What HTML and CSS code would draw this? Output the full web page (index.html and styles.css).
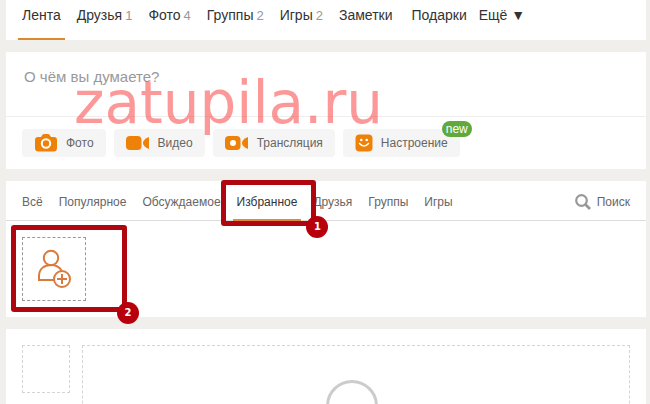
FILE: index.html
```html
<!DOCTYPE html>
<html lang="ru">
<head>
    <meta charset="UTF-8">
    <meta name="viewport" content="width=device-width, initial-scale=1.0">
    <title>Лента</title>
    <link rel="stylesheet" href="styles.css">
</head>
<body>
    <nav class="panel main-nav">
        <a class="nav-item active" href="#">Лента</a>
        <a class="nav-item" href="#">Друзья<span class="count">1</span></a>
        <a class="nav-item" href="#">Фото<span class="count">4</span></a>
        <a class="nav-item" href="#">Группы<span class="count">2</span></a>
        <a class="nav-item" href="#">Игры<span class="count">2</span></a>
        <a class="nav-item" href="#">Заметки<span class="count"></span></a>
        <a class="nav-item" href="#">Подарки</a>
        <button class="nav-more" type="button">Ещё ▼</button>
    </nav>

    <section class="panel composer">
        <input class="composer-input" type="text" placeholder="О чём вы думаете?" aria-label="О чём вы думаете?">
        <div class="composer-actions">
            <button class="action" type="button">
                <svg width="24" height="18" viewBox="0 0 24 18">
                    <path fill="#ee8208" d="M4 3h3l1.500-2.200Q9 0 10 0h4q1 0 1.500.8L17 3h3q3 0 3 3v8q0 3.500-3.500 3.500h-15Q1 17.500 1 14V6q0-3 3-3z"/>
                    <circle cx="12" cy="9.500" r="4.200" fill="none" stroke="#fff" stroke-width="2"/>
                </svg>
                Фото
            </button>
            <button class="action" type="button">
                <svg width="24" height="18" viewBox="0 0 24 18">
                    <rect x="0" y="2" width="15.500" height="14" rx="4" fill="#ee8208"/>
                    <path fill="#ee8208" d="M23 3v12q-6-2.500-6-6t6-6z"/>
                </svg>
                Видео
            </button>
            <button class="action" type="button">
                <svg width="24" height="18" viewBox="0 0 24 18">
                    <rect x="0" y="2" width="15.500" height="14" rx="4" fill="#ee8208"/>
                    <circle cx="8" cy="9" r="3" fill="#fff"/>
                    <path fill="#ee8208" d="M23 3v12q-6-2.500-6-6t6-6z"/>
                </svg>
                Трансляция
            </button>
            <button class="action" type="button">
                <svg width="18" height="18" viewBox="0 0 18 18">
                    <rect x="0.500" y="0.500" width="17" height="17" rx="4" fill="#ee8208"/>
                    <circle cx="6.300" cy="6" r="1.300" fill="#fff"/>
                    <circle cx="11.700" cy="6" r="1.300" fill="#fff"/>
                    <path d="M4.500 9.500q4.500 5 9 0" fill="none" stroke="#fff" stroke-width="1.500" stroke-linecap="round"/>
                </svg>
                Настроение
                <span class="new-badge">new</span>
            </button>
        </div>
        <div class="watermark">zatupila.ru</div>
    </section>

    <section class="panel feed">
        <div class="tabs">
            <a class="tab" href="#">Всё</a>
            <a class="tab" href="#">Популярное</a>
            <a class="tab" href="#">Обсуждаемое</a>
            <a class="tab active" href="#">Избранное<span class="mark mark-tab"><span class="mark-num">1</span></span></a>
            <a class="tab" href="#">Друзья</a>
            <a class="tab" href="#">Группы</a>
            <a class="tab" href="#">Игры</a>
            <button class="search" type="button">
                <svg width="16" height="16" viewBox="0 0 16 16" fill="none" stroke="#999">
                    <circle cx="6.500" cy="6.500" r="5.300" stroke-width="2.200"/>
                    <path d="M10.500 10.500l4.500 4.500" stroke-width="2.800"/>
                </svg>
                Поиск
            </button>
        </div>
        <div class="favorites">
            <button class="add-friend" type="button" aria-label="Добавить">
                <svg width="38" height="40" viewBox="-2 0 38 40" fill="none" stroke="#d97b3c" stroke-width="2">
                    <circle cx="14" cy="9" r="7.200"/>
                    <path d="M17 31H2v-4c0-7 5-11 12-11 5 0 8.500 2.200 10.500 5.500"/>
                    <circle cx="25" cy="30" r="8" fill="#fff"/>
                    <path d="M25 25v10M20 30h10"/>
                </svg>
            </button>
            <span class="mark mark-add"><span class="mark-num">2</span></span>
        </div>
    </section>

    <section class="panel placeholder">
        <div class="stub stub-avatar"></div>
        <div class="stub stub-post">
            <svg width="56" height="56" viewBox="0 0 56 56">
                <circle cx="28" cy="28" r="24.500" fill="none" stroke="#ccc" stroke-width="3"/>
            </svg>
        </div>
    </section>
</body>
</html>
```
FILE: styles.css
```css
* {
    box-sizing: border-box;
}

body {
    display: flex;
    flex-direction: column;
    gap: 12px;
    height: 100vh;
    margin: 0;
    padding: 0 4px 0 6px;
    overflow: hidden;
    background-color: #f0efec;
    color: #333;
    font-family: "Liberation Sans", Arial, sans-serif;
    font-size: 12px;
}

a {
    color: inherit;
    text-decoration: none;
}

button {
    margin: 0;
    padding: 0;
    border: none;
    background: none;
    color: inherit;
    font: inherit;
    cursor: pointer;
}

svg {
    display: block;
    flex: none;
}

.panel {
    position: relative;
    flex: none;
    background-color: #fff;
}

/* top navigation */
.main-nav {
    display: flex;
    gap: 8px;
    height: 40px;
    padding: 0 12px;
    font-size: 14px;
    line-height: 30px;
    white-space: nowrap;
}

.nav-item {
    padding: 0 4px;
}

.nav-item.active {
    border-bottom: 2px solid #d98b2b;
}

.count {
    margin-left: 3px;
    color: #999;
    font-size: 13px;
}

.nav-more {
    align-self: flex-start;
}

/* new post */
.composer-input {
    display: block;
    width: 100%;
    height: 65px;
    padding: 0 18px 16px;
    border: none;
    border-bottom: 1px solid #eee;
    outline: none;
    background: none;
    font-family: inherit;
    font-size: 15px;
}

.composer-input::placeholder {
    color: #999;
}

.composer-actions {
    display: flex;
    gap: 8px;
    padding: 12px 16px;
}

.action {
    position: relative;
    display: flex;
    align-items: center;
    gap: 8px;
    height: 28px;
    padding: 0 12px;
    border-radius: 4px;
    background-color: #f5f5f5;
    color: #666;
}

.new-badge {
    position: absolute;
    top: -8px;
    right: -12px;
    height: 16px;
    padding: 0 4px;
    border-radius: 8px;
    background-color: #62a83b;
    color: #fff;
    line-height: 16px;
}

.watermark {
    position: absolute;
    top: 17px;
    left: 68px;
    color: rgba(250, 50, 50, 0.5);
    font-family: "DejaVu Sans", Verdana, sans-serif;
    font-size: 58px;
    line-height: 68px;
    pointer-events: none;
}

/* feed filter */
.tabs {
    display: flex;
    gap: 8px;
    height: 40px;
    padding: 0 16px 0 12px;
    border-bottom: 1px solid #ddd;
    color: #666;
    line-height: 42px;
}

.tab {
    position: relative;
    margin-bottom: -1px;
    padding: 0 4px;
}

.tab.active {
    border-bottom: 2px solid #e08a3c;
    color: #333;
}

.search {
    display: flex;
    align-items: center;
    gap: 6px;
    height: 42px;
    margin-left: auto;
}

.favorites {
    position: relative;
    padding: 16px;
}

.add-friend {
    display: flex;
    align-items: center;
    justify-content: center;
    width: 64px;
    height: 64px;
    border: 1px dashed #999;
}

/* numbered frames */
.mark {
    position: absolute;
    z-index: 1;
    border: 5px solid #b0060f;
    border-radius: 3px;
    pointer-events: none;
}

.mark-tab {
    top: -1px;
    right: -15px;
    bottom: -7px;
    left: -12px;
}

.mark-add {
    top: 4px;
    left: 5px;
    width: 116px;
    height: 87px;
}

.mark-num {
    position: absolute;
    right: -17px;
    bottom: -17px;
    width: 22px;
    height: 22px;
    border-radius: 50%;
    background-color: #b8000c;
    color: #fff;
    font-family: "DejaVu Sans", Verdana, sans-serif;
    font-size: 10px;
    font-weight: bold;
    line-height: 22px;
    text-align: center;
}

/* empty post */
.placeholder {
    display: flex;
    flex: 1;
    gap: 12px;
    padding: 16px 16px 0;
    overflow: hidden;
}

.stub {
    border: 1px dashed #d4d4d4;
}

.stub-avatar {
    width: 48px;
    height: 48px;
}

.stub-post {
    display: flex;
    flex: 1;
    justify-content: center;
    height: 200px;
    padding: 32px 8px 0 0;
}
```
